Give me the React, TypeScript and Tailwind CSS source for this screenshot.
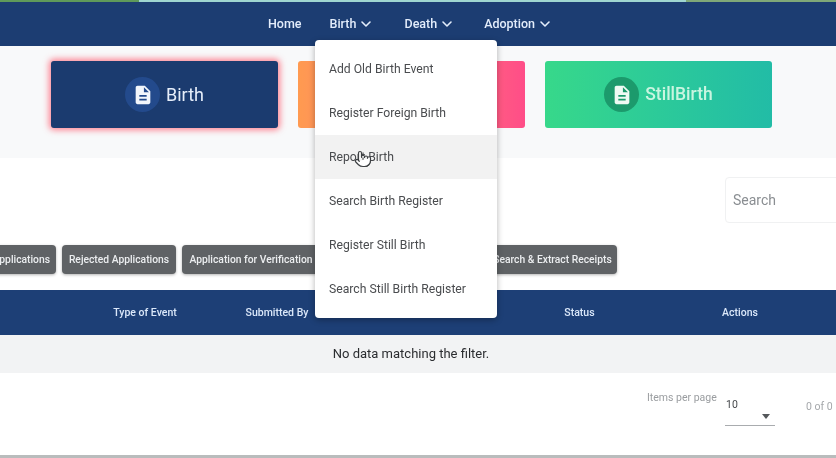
import { ChevronDown, Pointer } from "lucide-react";
import { MdDescription } from "react-icons/md";

const menuItems = [
  "Add Old Birth Event",
  "Register Foreign Birth",
  "Report Birth",
  "Search Birth Register",
  "Register Still Birth",
  "Search Still Birth Register",
];

const NavItem = ({ label, className }: { label: string; className: string }) => (
  <div className={`flex items-center gap-[2px] ${className}`}>
    <span>{label}</span>
    <ChevronDown size={16} strokeWidth={2.4} />
  </div>
);

const Chip = ({ label, className }: { label?: string; className: string }) => (
  <div className={`flex h-[29px] shrink-0 items-center whitespace-nowrap rounded-[4px] bg-[#5f6265] text-[10.3px] font-medium text-[#eceef0] shadow-[0_1px_3px_rgba(0,0,0,0.3)] ${className}`}>
    {label}
  </div>
);

const App = () => {
  return (
    <div className="relative h-[458px] w-[836px] overflow-hidden bg-white font-['Roboto',sans-serif] blur-[0.35px]">
      <div className="flex h-[2px]">
        <div className="w-[139px] bg-[#5f9a5a]" />
        <div className="flex-1 bg-[#9fd6d0]" />
        <div className="w-[150px] bg-[#7fa878]" />
      </div>

      <nav className="flex h-[44px] items-center bg-[#1c3d72] pl-[268px] text-[12.5px] font-medium text-[#e3edfb]">
        <span className="mr-[28px]">Home</span>
        <NavItem label="Birth" className="mr-[30px]" />
        <NavItem label="Death" className="mr-[29px]" />
        <NavItem label="Adoption" className="" />
      </nav>

      <section className="flex h-[112px] gap-[20px] bg-[#f8f9fa] pl-[51px] pt-[15px]">
        <div className="flex h-[67px] w-[227px] items-center justify-center gap-[6px] rounded-[3px] bg-[#1b3b6f] shadow-[0_0_6px_2px_rgba(255,90,110,0.75)]">
          <div className="flex h-[35px] w-[35px] items-center justify-center rounded-full bg-[#234a8c]">
            <MdDescription size={22} className="text-[#f2f6fc]" />
          </div>
          <span className="text-[18px] text-[#e6eefa]">Birth</span>
        </div>
        <div className="flex h-[67px] w-[227px] items-center justify-center gap-[6px] rounded-[3px] bg-gradient-to-r from-[#ff9a50] to-[#ff4d88]">
          <span className="text-[18px] text-white">Death</span>
        </div>
        <div className="flex h-[67px] w-[227px] items-center justify-center gap-[6px] rounded-[3px] bg-gradient-to-r from-[#37d88a] to-[#22bca6]">
          <div className="flex h-[35px] w-[35px] items-center justify-center rounded-full bg-[#1c9a6c]">
            <MdDescription size={22} className="text-[#eefaf3]" />
          </div>
          <span className="text-[17.5px] font-medium text-[#c9f5e0]">StillBirth</span>
        </div>
      </section>

      <div className="flex h-[87px] items-start justify-end pt-[19px]">
        <div className="mr-[-12px] flex h-[46px] w-[123px] shrink-0 items-center rounded-[4px] border border-[#f0f1f2] bg-white pl-[7px] text-[14px] text-[#8a8e92]">
          Search
        </div>
      </div>

      <div className="ml-[-60px] flex gap-[6px]">
        <Chip label="Applications" className="w-[116px] justify-end pr-[6px]" />
        <Chip label="Rejected Applications" className="w-[114px] justify-center" />
        <Chip label="Application for Verification" className="w-[138px] justify-center" />
        <Chip className="w-[156px]" />
        <Chip label="Search & Extract Receipts" className="w-[129px] justify-center" />
      </div>

      <div className="mt-[16px] grid h-[45px] grid-cols-[79px_132px_132px_172px_129px_192px] items-center bg-[#1d3f76] text-center text-[10.5px] font-medium text-[#dbe8fa]">
        <span />
        <span>Type of Event</span>
        <span>Submitted By</span>
        <span />
        <span>Status</span>
        <span>Actions</span>
      </div>

      <div className="flex h-[38px] items-center justify-center bg-[#f2f3f4] pr-[14px] text-[13px] text-[#2b2d30]">
        No data matching the filter.
      </div>

      <div className="flex items-start pl-[647px]">
        <span className="mt-[17px] w-[78px] text-[10.5px] text-[#9a9da0]">Items per page</span>
        <div className="mt-[24px] h-[29px] w-[50px] border-b border-[#a9acaf] pl-[1px] text-[10.5px] text-[#44474a]">
          <div>10</div>
          <div className="ml-[36px] mt-[1px] h-0 w-0 border-x-[4px] border-t-[5px] border-x-transparent border-t-[#55585b]" />
        </div>
        <span className="ml-[31px] mt-[26px] whitespace-nowrap text-[10.5px] text-[#a5a8ab]">0 of 0</span>
      </div>

      {/* bottom edge of the recorded page */}
      <div className="absolute inset-x-0 bottom-0 h-[3px] bg-[#b9bcbc]" />

      {/* open Birth menu */}
      <div className="absolute left-[315px] top-[40px] w-[182px] rounded-[4px] bg-white py-[7px] shadow-[0_2px_6px_rgba(0,0,0,0.3)]">
        {menuItems.map((item) => (
          <div
            key={item}
            className={`flex h-[44px] items-center whitespace-nowrap pl-[14px] text-[12.2px] text-[#4a4c4f] ${item === "Report Birth" ? "bg-[#f2f2f2]" : ""}`}
          >
            {item}
          </div>
        ))}
      </div>

      <Pointer size={18} strokeWidth={1.6} className="absolute left-[354px] top-[150px] fill-white text-[#3c3f42]" />
    </div>
  );
};

export default App;
